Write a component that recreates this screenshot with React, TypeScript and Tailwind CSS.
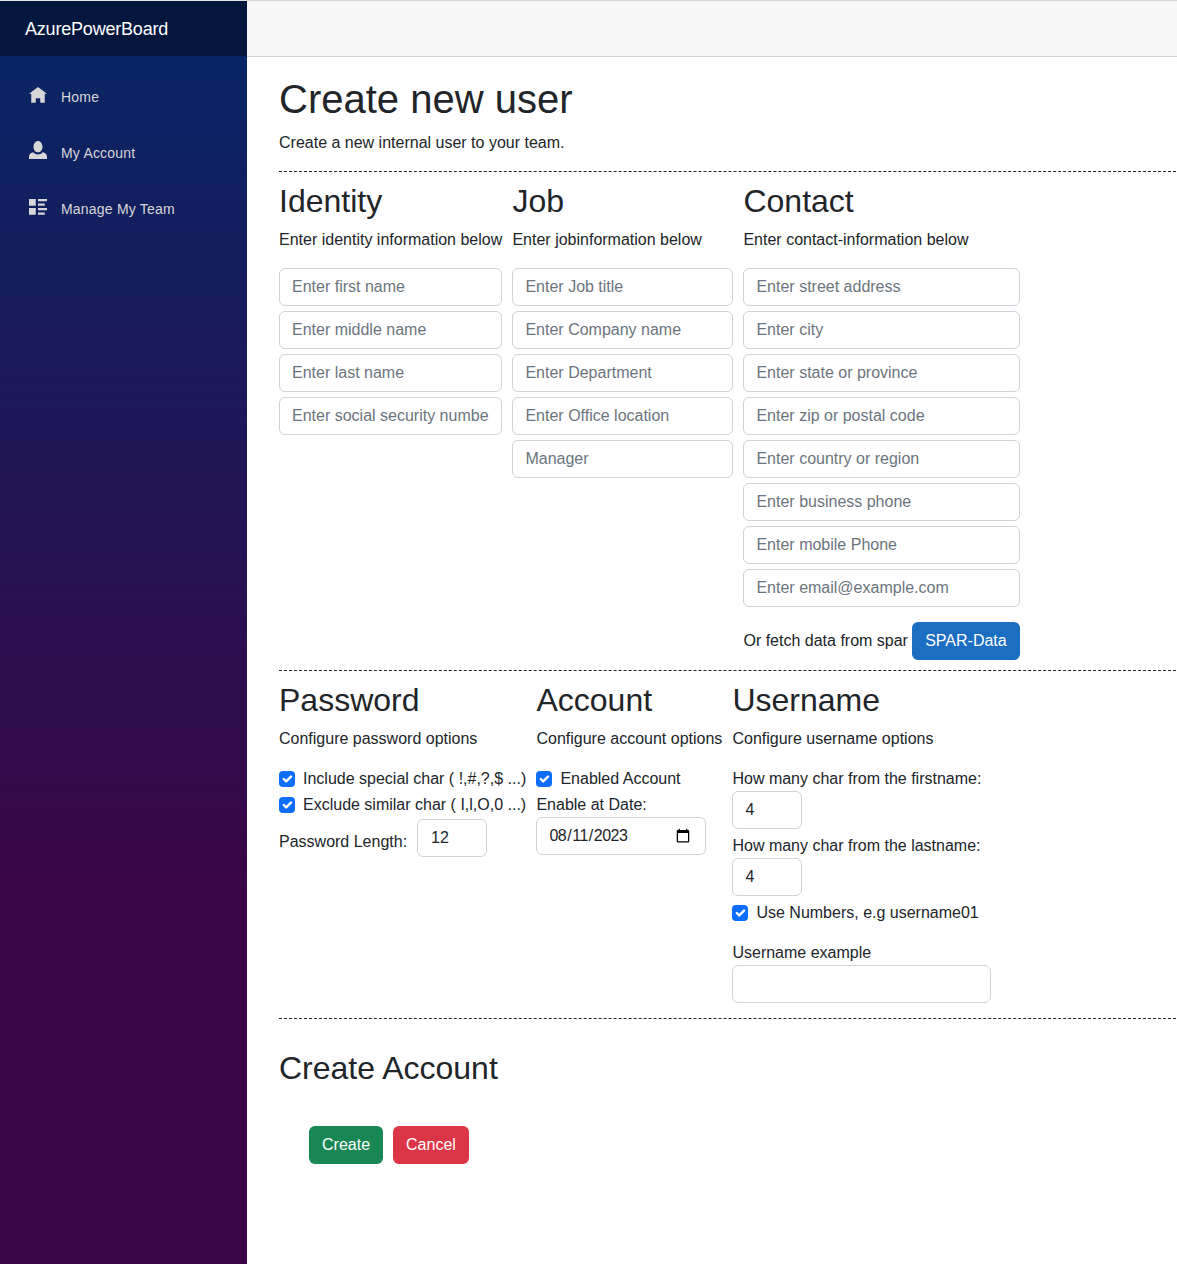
import React from 'react';

const font = { fontFamily: '"Liberation Sans", Arial, sans-serif' };

const Glyph = ({ d, className }: { d: string; className: string }) => (
  <svg width="18" height="18" viewBox="0 0 8 8" fill="currentColor" className={`text-[#d7d7d7] ${className}`}>
    <path d={d} />
  </svg>
);

const NavItem = ({ icon, label }: { icon: React.ReactNode; label: string }) => (
  <div className="flex h-[56px] items-center pl-[29px] text-[14px] tracking-[0.2px] text-[#d7d7d7]">
    <span className="flex w-[32px]">{icon}</span>
    <span>{label}</span>
  </div>
);

const TextInput = ({ placeholder, className = '' }: { placeholder?: string; className?: string }) => (
  <input
    type="text"
    placeholder={placeholder}
    className={`block h-[38px] w-full rounded-[6px] border border-[#ced4da] bg-white px-3 text-[16px] text-[#212529] outline-none placeholder:text-[#6c757d] ${className}`}
  />
);

const NumberBox = ({ value, className = '' }: { value: string; className?: string }) => (
  <input
    type="text"
    defaultValue={value}
    className={`block h-[38px] w-[70px] rounded-[6px] border border-[#ced4da] bg-white px-3 text-[16px] text-[#212529] outline-none ${className}`}
  />
);

const Check = ({ label }: { label: string }) => (
  <label className="flex h-[26px] items-center whitespace-nowrap">
    <span className="mr-2 flex h-4 w-4 items-center justify-center rounded-[4px] bg-[#0d6efd]">
      <svg width="16" height="16" viewBox="0 0 20 20" fill="none">
        <path d="M6 10l3 3l6-6" stroke="#fff" strokeWidth="3" strokeLinecap="round" strokeLinejoin="round" />
      </svg>
    </span>
    {label}
  </label>
);

const Heading = ({ title, sub }: { title: string; sub: string }) => (
  <div className="mb-[15px]">
    <h2 className="mb-[8px] text-[32px] leading-[38px] font-normal">{title}</h2>
    <p className="leading-[24px] whitespace-nowrap">{sub}</p>
  </div>
);

const Rule = () => <hr className="border-0 border-t border-dashed border-[#212529]" />;

export default function App() {
  return (
    <div style={font} className="flex min-h-[1264px] bg-white text-[16px] text-[#212529]">
      <aside className="w-[247px] shrink-0 border-t border-[#e4e4e4] bg-linear-to-b/srgb from-[#052767] to-[#3a0647] to-70%">
        <div className="flex h-[55px] items-center bg-black/40 pt-[1px] pl-[25px] text-[18px] tracking-[-0.2px] text-white">AzurePowerBoard</div>
        <nav className="pt-[13px]">
          <NavItem
            icon={<Glyph className="-translate-y-[1px]" d="M4 0l-4 3h1v4h2v-2h2v2h2v-4.03l1 .03-4-3z" />}
            label="Home"
          />
          <NavItem
            icon={<Glyph className="-translate-y-[3px]" d="M4 0c-1.1 0-2 1.12-2 2.5s.9 2.5 2 2.5 2-1.12 2-2.5-.9-2.5-2-2.5zm-2.09 5c-1.06.05-1.91.92-1.91 2v1h8v-1c0-1.08-.84-1.95-1.91-2-.54.61-1.28 1-2.09 1-.81 0-1.55-.39-2.09-1z" />}
            label="My Account"
          />
          <NavItem
            icon={<Glyph className="-translate-y-[1px]" d="M0 0v3h3v-3h-3zm4 0v1h4v-1h-4zm0 2v1h3v-1h-3zm-4 2v3h3v-3h-3zm4 0v1h4v-1h-4zm0 2v1h3v-1h-3z" />}
            label="Manage My Team"
          />
        </nav>
      </aside>

      <div className="min-w-0 flex-1">
        <div className="h-[57px] border-y border-[#d6d5d5] bg-[#f7f7f7]" />
        <main className="pt-[18px] pl-[32px] pr-[1px]">
          <h1 className="mb-[8px] text-[40px] leading-[48px] font-normal">Create new user</h1>
          <p className="mb-4 leading-[24px]">Create a new internal user to your team.</p>
          <Rule />

          <div className="flex pt-[10px]">
            <section className="mr-[10.45px] w-[223px]">
              <Heading title="Identity" sub="Enter identity information below" />
              <div className="flex flex-col gap-[5px] pt-[1px]">
                <TextInput placeholder="Enter first name" />
                <TextInput placeholder="Enter middle name" />
                <TextInput placeholder="Enter last name" />
                <TextInput placeholder="Enter social security number" />
              </div>
            </section>
            <section className="mr-[10px] w-[221px]">
              <Heading title="Job" sub="Enter jobinformation below" />
              <div className="flex flex-col gap-[5px] pt-[1px]">
                <TextInput placeholder="Enter Job title" />
                <TextInput placeholder="Enter Company name" />
                <TextInput placeholder="Enter Department" />
                <TextInput placeholder="Enter Office location" />
                <TextInput placeholder="Manager" />
              </div>
            </section>
            <section className="w-[276.55px]">
              <Heading title="Contact" sub="Enter contact-information below" />
              <div className="flex flex-col gap-[5px] pt-[1px]">
                <TextInput placeholder="Enter street address" />
                <TextInput placeholder="Enter city" />
                <TextInput placeholder="Enter state or province" />
                <TextInput placeholder="Enter zip or postal code" />
                <TextInput placeholder="Enter country or region" />
                <TextInput placeholder="Enter business phone" />
                <TextInput placeholder="Enter mobile Phone" />
                <TextInput placeholder="Enter email@example.com" />
              </div>
              <div className="mt-[15px] flex items-center">
                <span className="mr-1 whitespace-nowrap">Or fetch data from spar</span>
                <button className="h-[38px] w-[108px] rounded-[6px] bg-[#1b6ec2] text-white">SPAR-Data</button>
              </div>
            </section>
          </div>

          <div className="mt-[10px]"><Rule /></div>

          <div className="flex pt-[10px]">
            <section className="mr-[10px] w-[247.45px]">
              <Heading title="Password" sub="Configure password options" />
              <Check label="Include special char ( !,#,?,$ ...)" />
              <Check label="Exclude similar char ( I,l,O,0 ...)" />
              <div className="mt-[1px] flex items-end">
                <span className="mr-[10px] mb-[3px] leading-[24px]">Password Length:</span>
                <NumberBox value="12" className="pl-[13px]" />
              </div>
            </section>
            <section className="mr-[10px] w-[186px]">
              <Heading title="Account" sub="Configure account options" />
              <Check label="Enabled Account" />
              <div className="h-[25px] leading-[26px]">Enable at Date:</div>
              <input
                type="date"
                defaultValue="2023-08-11"
                className="block h-[38px] w-[170px] rounded-[6px] border border-[#ced4da] bg-white pr-3 pl-[11px] text-[16px] tracking-[-0.5px] text-[#212529] outline-none"
              />
            </section>
            <section className="w-[259px]">
              <Heading title="Username" sub="Configure username options" />
              <div className="h-[25px] leading-[26px]">How many char from the firstname:</div>
              <NumberBox value="4" className="mb-[5px]" />
              <div className="h-[24px] leading-[24px]">How many char from the lastname:</div>
              <NumberBox value="4" />
              <div className="mt-[4px]"><Check label="Use Numbers, e.g username01" /></div>
              <div className="mt-[15px] leading-[24px]">Username example</div>
              <TextInput />
            </section>
          </div>

          <div className="mt-[15px]"><Rule /></div>

          <h2 className="mt-[30px] text-[32px] leading-[38px] font-normal">Create Account</h2>
          <div className="mt-[39px] flex gap-[10px] pl-[30px]">
            <button className="h-[38px] rounded-[6px] bg-[#198754] px-[13px] text-white">Create</button>
            <button className="h-[38px] rounded-[6px] bg-[#dc3545] px-[13px] text-white">Cancel</button>
          </div>
        </main>
      </div>
    </div>
  );
}
